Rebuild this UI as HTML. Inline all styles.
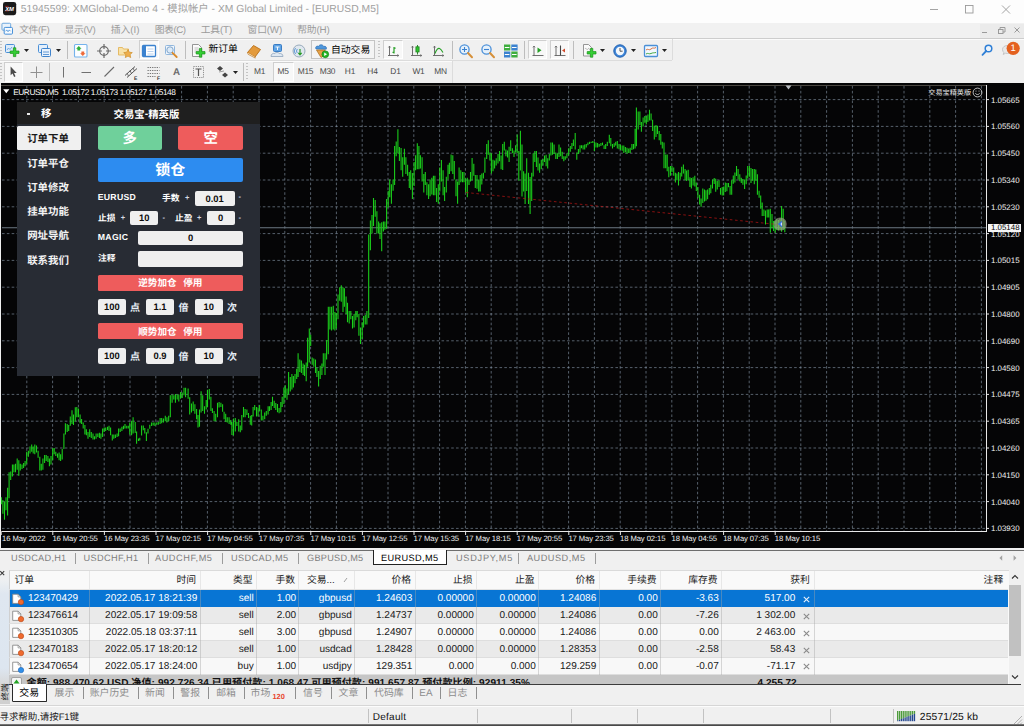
<!DOCTYPE html>
<html lang="zh"><head><meta charset="utf-8"><title>51945599: XMGlobal-Demo 4 - [EURUSD,M5]</title>
<style>
html,body{margin:0;padding:0;background:#f0f0f0;}
body{width:1024px;height:726px;overflow:hidden;font-family:"Liberation Sans","Noto Sans CJK SC",sans-serif;}
#app{text-rendering:geometricPrecision;position:relative;width:1024px;height:726px;overflow:hidden;background:#f0f0f0;font-size:10px;color:#000;}
#app *{box-sizing:border-box;}
.a{position:absolute;white-space:nowrap;}
svg{overflow:visible;}
.r{text-align:right;}
.c{text-align:center;}
.b{font-weight:bold;}

</style></head><body>
<div id="app">
<div class="a" style="left:0;top:0;width:1024px;height:23px;background:#fdfdfd"></div>
<svg class="a" style="left:2.900px;top:2px" width="13.200" height="13.200" viewBox="0 0 14 14"><rect x="0" y="0" width="14" height="14" rx="2.500" fill="#1a1a1a"/><path d="M2.200 4.600 L6 4.600 M2.200 9.400 L6 9.400" stroke="#c22" stroke-width=".7"/><text x="7" y="9.300" font-family="Liberation Sans" font-weight="bold" font-style="italic" font-size="6.200" fill="#fff" text-anchor="middle">XM</text></svg>
<div class="a" style="letter-spacing:0.040px;left:20.800px;top:3px;height:14px;line-height:14px;font-size:10.300px;color:#a0a0a0">51945599: XMGlobal-Demo 4 - 模拟帐户 - XM Global Limited - [EURUSD,M5]</div>
<svg class="a" style="left:920px;top:0" width="104" height="20" viewBox="0 0 104 20" fill="none" stroke="#9a9a9a" stroke-width="0.9"><path d="M10 9.500h8"/><rect x="45.500" y="5.500" width="7.500" height="7.500"/><path d="M82 5.500l8 8M90 5.500l-8 8"/></svg>
<div class="a" style="left:0;top:22.500px;width:1024px;height:15.500px;background:#f1f1f1"></div>
<svg class="a" style="left:0.500px;top:22.300px" width="13.500" height="13.500" viewBox="0 0 14 14" fill="none"><rect x="1" y="1.300" width="9" height="7.200" rx="1" stroke="#6aa5dd" fill="#e9f3fc"/><rect x="3.300" y="5.600" width="8.600" height="7" rx="1" stroke="#3d8ad6" fill="#f7fbff"/><path d="M4.800 9.600l1.200-1.400 1.300 1.900 1.300-1.900 1.300 1.400" stroke="#3d8ad6" stroke-width=".8"/></svg>
<div class="a" style="letter-spacing:-0.402px;left:19.2px;top:24px;height:14px;line-height:14px;font-size:9.800px;color:#9b9b9b">文件(F)</div>
<div class="a" style="letter-spacing:-0.331px;left:64.5px;top:24px;height:14px;line-height:14px;font-size:9.800px;color:#9b9b9b">显示(V)</div>
<div class="a" style="letter-spacing:0.011px;left:110.7px;top:24px;height:14px;line-height:14px;font-size:9.800px;color:#9b9b9b">插入(I)</div>
<div class="a" style="letter-spacing:-0.481px;left:154.8px;top:24px;height:14px;line-height:14px;font-size:9.800px;color:#9b9b9b">图表(C)</div>
<div class="a" style="letter-spacing:-0.162px;left:200.7px;top:24px;height:14px;line-height:14px;font-size:9.800px;color:#9b9b9b">工具(T)</div>
<div class="a" style="letter-spacing:-0.195px;left:247.6px;top:24px;height:14px;line-height:14px;font-size:9.800px;color:#9b9b9b">窗口(W)</div>
<div class="a" style="letter-spacing:-0.141px;left:297.2px;top:24px;height:14px;line-height:14px;font-size:9.800px;color:#9b9b9b">帮助(H)</div>
<div class="a" style="left:980px;top:23.500px;width:44px;height:14px;background:#ebebeb"></div>
<svg class="a" style="left:976px;top:24px" width="48" height="12" viewBox="0 0 48 12" fill="none" stroke="#9a9a9a" stroke-width="1"><path d="M6 8.500h5"/><rect x="22.500" y="5.500" width="4.500" height="4"/><path d="M24 5.500v-2h5v4.500h-2"/><path d="M38.500 3.500l5 5M43.500 3.500l-5 5"/></svg>
<div class="a" style="left:0;top:38px;width:1024px;height:46px;background:#f0f0f0"></div>
<div class="a" style="left:0;top:37.600px;width:1024px;height:1px;background:#cdcdcd"></div>
<div class="a" style="left:0;top:38.600px;width:1024px;height:1px;background:#fbfbfb"></div>
<div class="a" style="left:0;top:60px;width:672px;height:1px;background:#dcdcdc"></div>
<div class="a" style="left:672px;top:39px;width:1px;height:21px;background:#dcdcdc"></div>
<div class="a" style="left:0;top:61px;width:452px;height:1px;background:#fbfbfb"></div>
<div class="a" style="left:452px;top:61px;width:1px;height:22px;background:#dcdcdc"></div>
<div class="a" style="left:0px;top:41px;width:2px;height:18px;background:repeating-linear-gradient(#c4c4c4 0 1px,transparent 1px 3px)"></div>
<svg class="a" style="left:4.0px;top:42.6px" width="16" height="16" viewBox="0 0 16 16" fill="none"><rect x="1.5" y="1.5" width="9" height="8" rx="1" fill="#dcebfa" stroke="#4a8fd6"/><path d="M3 7l1.5-2 1.500 1.500 2-2.500" stroke="#4a8fd6" stroke-width=".7"/><path d="M6.200 8h3.200v-3.200h2.400v3.200h3.200v2.400h-3.200v3.200h-2.400v-3.200h-3.200z" fill="#35cf35" stroke="#149014" stroke-width=".7"/></svg>
<svg class="a" style="left:23.5px;top:49.0px" width="5" height="3" viewBox="0 0 5 3" fill="none"><path d="M0 0h5l-2.500 3z" fill="#222"/></svg>
<svg class="a" style="left:37.0px;top:42.6px" width="16" height="16" viewBox="0 0 16 16" fill="none"><rect x="1.5" y="1.5" width="9" height="8" rx="1" fill="#e4effb" stroke="#4a8fd6"/><rect x="4.5" y="5.5" width="9" height="8" rx="1" fill="#e9f2fc" stroke="#3f83cc"/><path d="M6 9h6M6 11.500h6" stroke="#3f83cc" stroke-width=".8"/></svg>
<svg class="a" style="left:56.0px;top:49.0px" width="5" height="3" viewBox="0 0 5 3" fill="none"><path d="M0 0h5l-2.500 3z" fill="#222"/></svg>
<div class="a" style="left:67.2px;top:41px;width:1px;height:18px;background:#bdbdbd"></div>
<svg class="a" style="left:73.0px;top:42.6px" width="16" height="16" viewBox="0 0 16 16" fill="none"><rect x="1.500" y="1.500" width="12.500" height="12.500" rx="1" fill="#fbfdff" stroke="#74b2ec" stroke-width="1.100"/><path d="M5.800 3l2.700 2.700-1.300 0v1.800h-2.800v-1.800h-1.300z" fill="#2fae3a"/><path d="M9.800 13l-2.700-2.700 1.300 0v-1.800h2.800v1.800h1.300z" fill="#ee6a3a"/></svg>
<svg class="a" style="left:96.0px;top:42.6px" width="16" height="16" viewBox="0 0 16 16" fill="none"><circle cx="8" cy="8" r="4.3" stroke="#6a6a6a" stroke-width="1.2"/><path d="M8 1v5M8 10v5M1 8h5M10 8h5" stroke="#6a6a6a" stroke-width="1.200"/></svg>
<svg class="a" style="left:117.0px;top:42.6px" width="17" height="16" viewBox="0 0 17 16" fill="none"><path d="M1.500 4.500h4l1 1.500h5v6h-10z" fill="#f8e2a8" stroke="#e3b55a" stroke-width=".9"/><path d="M11 6.500l1.300 2.700 3 .4-2.200 2 .6 3-2.700-1.500-2.700 1.500.6-3-2.200-2 3-.4z" fill="#efae4c" stroke="#cf8f2a" stroke-width=".7"/></svg>
<div class="a" style="left:139.0px;top:40px;width:19.5px;height:19px;background:#f8f8f8;border:1px solid #cfcfcf;border-right-color:#fff;border-bottom-color:#fff"></div>
<svg class="a" style="left:141.0px;top:42.6px" width="16" height="16" viewBox="0 0 16 16" fill="none"><rect x="1.5" y="2.5" width="13" height="11" rx="1" fill="#fff" stroke="#3b82cf" stroke-width="1.3"/><rect x="2" y="3" width="3" height="10" fill="#3b82cf"/><path d="M6.500 6h6M6.500 8.500h6M6.500 11h6" stroke="#a9c7ea" stroke-width=".8"/></svg>
<svg class="a" style="left:163.0px;top:42.6px" width="16" height="16" viewBox="0 0 16 16" fill="none"><rect x="2.5" y="2.5" width="9" height="9" rx="1" fill="#eef5fc" stroke="#8fb6dd"/><circle cx="7" cy="7" r="3.2" fill="#dcebf9" stroke="#7a9ec4" stroke-width=".9"/><path d="M9.500 9.800l4.200 4.200" stroke="#d98a2b" stroke-width="1.800" stroke-linecap="round"/></svg>
<div class="a" style="left:185.0px;top:41px;width:1px;height:18px;background:#bdbdbd"></div>
<svg class="a" style="left:190.3px;top:42.6px" width="16" height="16" viewBox="0 0 16 16" fill="none"><path d="M2.500 1.500h6l3 3v9h-9z" fill="#fafafa" stroke="#8a8a8a" stroke-width=".9"/><path d="M4.500 5h4M4.500 7h5M4.500 9h3" stroke="#aaa" stroke-width=".7"/><path d="M6.200 8.600h3.200v-3.200h2.400v3.200h3.200v2.400h-3.200v3.200h-2.400v-3.200h-3.200z" fill="#35cf35" stroke="#149014" stroke-width=".7"/></svg>
<div class="a" style="left:208.5px;top:43px;height:14px;line-height:14px;font-size:9.8px;color:#000">新订单</div>
<svg class="a" style="left:245.5px;top:42.6px" width="16" height="16" viewBox="0 0 16 16" fill="none"><path d="M1.500 9.500l6-7 7 4-5.500 7.500z" fill="#e39a3c" stroke="#b86d14" stroke-width=".9"/><path d="M1.500 9.500l.6 1.800 7.200 3.800-.3-1.100" fill="#f7e3c0" stroke="#b86d14" stroke-width=".6"/></svg>
<svg class="a" style="left:269.0px;top:42.6px" width="16" height="16" viewBox="0 0 16 16" fill="none"><rect x="4.5" y="1.5" width="8" height="7" rx="1" fill="#5fa4e6" stroke="#2d73c0" stroke-width=".9"/><path d="M6.500 4h4M8.500 4v3" stroke="#fff" stroke-width=".9"/><path d="M2 13.500c0-2.500 2-3.500 3.800-3 .8-1.400 3.600-1.400 4.400 0 2-.4 3.800.8 3.800 3z" fill="#dfe8f2" stroke="#8ea4bd" stroke-width=".8"/></svg>
<svg class="a" style="left:290.5px;top:42.6px" width="16" height="16" viewBox="0 0 16 16" fill="none"><circle cx="8" cy="8" r="6" fill="#dfe7ee" stroke="#8fa3b5" stroke-width=".9"/><path d="M4.500 5a4.500 4.500 0 0 0 0 6M6.500 6a2.600 2.600 0 0 0 0 4" stroke="#4f8fd3" stroke-width=".9"/><path d="M9 6v5.500M7.300 9.800l1.700 2 1.700-2" stroke="#2a9a2a" stroke-width="1.200"/></svg>
<div class="a" style="left:311px;top:40px;width:63.5px;height:19px;border:1px solid #c4c4c4;background:#f4f4f4"></div>
<svg class="a" style="left:313.5px;top:42.6px" width="16" height="16" viewBox="0 0 16 16" fill="none"><path d="M2 6c-1.200-2 1-3.600 2.600-2.600.6-2 4.200-2.200 5 0 2-.6 3.600 1 2.600 2.800z" fill="#4f97dc" stroke="#2c6fb5" stroke-width=".7"/><path d="M2.500 7l4.500 7.500 4-2.500V7z" fill="#e6a24a" stroke="#a86a18" stroke-width=".7"/><circle cx="11.3" cy="11.3" r="3.4" fill="#25b425" stroke="#0e7d0e" stroke-width=".6"/><path d="M10.200 9.600v3.400l2.800-1.700z" fill="#fff"/></svg>
<div class="a" style="left:331px;top:44px;height:14px;line-height:14px;font-size:9.8px;color:#000">自动交易</div>
<div class="a" style="left:378px;top:41px;width:2px;height:18px;background:repeating-linear-gradient(#c4c4c4 0 1px,transparent 1px 3px)"></div>
<div class="a" style="left:383.0px;top:40px;width:19.5px;height:19px;background:#f8f8f8;border:1px solid #cfcfcf;border-right-color:#fff;border-bottom-color:#fff"></div>
<svg class="a" style="left:384.5px;top:42.6px" width="16" height="16" viewBox="0 0 16 16" fill="none"><path d="M4.500 3.200v9.300M3 12.500h10.700" stroke="#606060" stroke-width=".9"/><path d="M3.400 4.500l1.100-1.400 1.100 1.400M12.400 11.400l1.400 1.100-1.400 1.100" stroke="#606060" stroke-width=".75"/><path d="M9 4v6.500M7.500 9.300h1.500M9 5.200h1.600" stroke="#27a027" stroke-width="1.200"/></svg>
<svg class="a" style="left:407.5px;top:42.6px" width="16" height="16" viewBox="0 0 16 16" fill="none"><path d="M4.500 3.200v9.300M3 12.500h10.700" stroke="#606060" stroke-width=".9"/><path d="M3.400 4.500l1.100-1.400 1.100 1.400M12.400 11.400l1.400 1.100-1.400 1.100" stroke="#606060" stroke-width=".75"/><path d="M9.500 2v9.500" stroke="#1d7d1d" stroke-width=".9"/><rect x="7.900" y="3.800" width="3.200" height="5.200" fill="#2ec22e" stroke="#1d7d1d" stroke-width=".7"/></svg>
<svg class="a" style="left:430.0px;top:42.6px" width="16" height="16" viewBox="0 0 16 16" fill="none"><path d="M4.500 3.200v9.300M3 12.500h10.700" stroke="#606060" stroke-width=".9"/><path d="M3.400 4.500l1.100-1.400 1.100 1.400M12.400 11.400l1.400 1.100-1.400 1.100" stroke="#606060" stroke-width=".75"/><path d="M5 10.500c1.200-3.600 3-5.800 4.600-5s2.600 2.600 3.400 4" stroke="#27a027" stroke-width="1.100"/></svg>
<div class="a" style="left:451.5px;top:41px;width:1px;height:18px;background:#bdbdbd"></div>
<svg class="a" style="left:457.5px;top:42.6px" width="16" height="16" viewBox="0 0 16 16" fill="none"><circle cx="6.5" cy="6.5" r="4.6" fill="#e6f1fb" stroke="#4b90d9" stroke-width="1.3"/><path d="M10 10l4 4.200" stroke="#d6903a" stroke-width="2" stroke-linecap="round"/><path d="M4 6.500h5M6.500 4v5" stroke="#3b82cf" stroke-width="1.100"/></svg>
<svg class="a" style="left:479.5px;top:42.6px" width="16" height="16" viewBox="0 0 16 16" fill="none"><circle cx="6.5" cy="6.5" r="4.6" fill="#e6f1fb" stroke="#4b90d9" stroke-width="1.3"/><path d="M10 10l4 4.200" stroke="#d6903a" stroke-width="2" stroke-linecap="round"/><path d="M4 6.500h5" stroke="#3b82cf" stroke-width="1.100"/></svg>
<svg class="a" style="left:502.5px;top:42.6px" width="16" height="16" viewBox="0 0 16 16" fill="none"><rect x="1" y="1.5" width="6.3" height="6" fill="#3fae3f"/><rect x="8.3" y="1.5" width="6.3" height="6" fill="#3b82cf"/><rect x="1" y="8.5" width="6.3" height="6" fill="#3b82cf"/><rect x="8.3" y="8.5" width="6.3" height="6" fill="#3fae3f"/><path d="M1.800 4.500h4.600M9 4.500h4.600M1.800 11.500h4.600M9 11.500h4.600" stroke="#fff" stroke-width="1"/></svg>
<div class="a" style="left:524.0px;top:41px;width:1px;height:18px;background:#bdbdbd"></div>
<div class="a" style="left:527.5px;top:40px;width:19.5px;height:19px;background:#f8f8f8;border:1px solid #cfcfcf;border-right-color:#fff;border-bottom-color:#fff"></div>
<svg class="a" style="left:529.5px;top:42.6px" width="16" height="16" viewBox="0 0 16 16" fill="none"><path d="M4 3v9.500M2.500 12.500h11" stroke="#606060" stroke-width=".9"/><path d="M2.900 4.400l1.100-1.400 1.100 1.400" stroke="#606060" stroke-width=".75"/><path d="M7.500 4.500v5.500l4-2.750z" fill="#27a027"/></svg>
<div class="a" style="left:549.5px;top:40px;width:19.5px;height:19px;background:#f8f8f8;border:1px solid #cfcfcf;border-right-color:#fff;border-bottom-color:#fff"></div>
<svg class="a" style="left:551.5px;top:42.6px" width="16" height="16" viewBox="0 0 16 16" fill="none"><path d="M4 3v9.500M2.500 12.500h11" stroke="#606060" stroke-width=".9"/><path d="M2.900 4.400l1.100-1.400 1.100 1.400" stroke="#606060" stroke-width=".75"/><path d="M8.500 2.500v10" stroke="#444" stroke-width="1.100"/><path d="M13 5.500l-3 2 3 2z" fill="#d24a2a"/></svg>
<div class="a" style="left:573.0px;top:41px;width:1px;height:18px;background:#bdbdbd"></div>
<svg class="a" style="left:580.5px;top:42.6px" width="16" height="16" viewBox="0 0 16 16" fill="none"><path d="M2.500 1.500h5l3 3v8.500h-8z" fill="#fafafa" stroke="#8a8a8a" stroke-width=".9"/><path d="M4 6c1-2 2 2 3 0s1.500 1.500 2 .5" stroke="#999" stroke-width=".7"/><path d="M6.200 8.600h3.200v-3.200h2.400v3.200h3.200v2.400h-3.200v3.200h-2.400v-3.200h-3.200z" fill="#35cf35" stroke="#149014" stroke-width=".7"/></svg>
<svg class="a" style="left:599.5px;top:49.0px" width="5" height="3" viewBox="0 0 5 3" fill="none"><path d="M0 0h5l-2.500 3z" fill="#222"/></svg>
<svg class="a" style="left:611.5px;top:42.6px" width="16" height="16" viewBox="0 0 16 16" fill="none"><circle cx="8" cy="8" r="6.200" fill="#3f86d9" stroke="#1f5fae" stroke-width="1"/><circle cx="8" cy="8" r="4.200" fill="#f4f8fc"/><path d="M8 5v3.200h2.600" stroke="#444" stroke-width=".9"/></svg>
<svg class="a" style="left:630.5px;top:49.0px" width="5" height="3" viewBox="0 0 5 3" fill="none"><path d="M0 0h5l-2.500 3z" fill="#222"/></svg>
<svg class="a" style="left:642.5px;top:42.6px" width="16" height="16" viewBox="0 0 16 16" fill="none"><rect x="1.500" y="2.500" width="13" height="11" rx="1" fill="#f2f8ff" stroke="#4a8fd6" stroke-width="1.300"/><path d="M3 7c2-2 3 1 5-1s3 0 5-1.500" stroke="#d2622a" stroke-width=".9"/><path d="M3 11c2-1.500 3 .5 5-.5s3-.5 5-1" stroke="#2e9e2e" stroke-width=".9"/></svg>
<svg class="a" style="left:662.0px;top:49.0px" width="5" height="3" viewBox="0 0 5 3" fill="none"><path d="M0 0h5l-2.500 3z" fill="#222"/></svg>
<svg class="a" style="left:979.5px;top:43.0px" width="14" height="14" viewBox="0 0 14 14" fill="none"><circle cx="8.500" cy="5.500" r="3.300" stroke="#2f7fd6" stroke-width="1.500" fill="#eaf3fc"/><path d="M6.200 8l-3.700 3.800" stroke="#2f7fd6" stroke-width="1.800" stroke-linecap="round"/></svg>
<svg class="a" style="left:1001.0px;top:41.0px" width="18" height="16" viewBox="0 0 18 16" fill="none"><path d="M1.500 8.500c0-2.500 2.200-4 5-4s5 1.500 5 4-2.200 4-5 4c-.7 0-1.300-.1-1.900-.3l-2.400 1.300.6-2c-.8-.7-1.300-1.800-1.300-3z" fill="#e8e8e8" stroke="#bdbdbd" stroke-width=".8"/><circle cx="12.200" cy="7.300" r="6.600" fill="#e4611f"/><text x="12.200" y="10.300" font-family="Liberation Sans" font-size="9.500" fill="#fff" text-anchor="middle">1</text></svg>
<div class="a" style="left:0px;top:63px;width:2px;height:18px;background:repeating-linear-gradient(#c4c4c4 0 1px,transparent 1px 3px)"></div>
<div class="a" style="left:3.500px;top:62px;width:19.500px;height:20px;background:#f8f8f8;border:1px solid #cfcfcf;border-right-color:#fff;border-bottom-color:#fff"></div>
<svg class="a" style="left:5.5px;top:64.0px" width="16" height="16" viewBox="0 0 16 16" fill="none"><path d="M4.600 2.500v8.800l2-1.800 1.500 3.400 1.400-.6-1.500-3.400h2.700z" fill="#4c4c4c"/></svg>
<svg class="a" style="left:28.0px;top:64.0px" width="16" height="16" viewBox="0 0 16 16" fill="none"><path d="M8.500 2.500v11.500M2.500 8.500h12" stroke="#909090" stroke-width="1"/></svg>
<div class="a" style="left:49.0px;top:63px;width:1px;height:18px;background:#bdbdbd"></div>
<svg class="a" style="left:55.0px;top:64.0px" width="16" height="16" viewBox="0 0 16 16" fill="none"><path d="M8.500 3v10.500" stroke="#707070" stroke-width="1"/></svg>
<svg class="a" style="left:78.0px;top:64.0px" width="16" height="16" viewBox="0 0 16 16" fill="none"><path d="M3.500 8.500h9.500" stroke="#707070" stroke-width="1"/></svg>
<svg class="a" style="left:101.0px;top:64.0px" width="16" height="16" viewBox="0 0 16 16" fill="none"><path d="M3.500 12.500l9.500-9.500" stroke="#6a6a6a" stroke-width="1.100"/></svg>
<svg class="a" style="left:123.0px;top:64.0px" width="16" height="16" viewBox="0 0 16 16" fill="none"><path d="M2 11.500l10-9M4 13.500l10-9" stroke="#555" stroke-width="1"/><path d="M4 9l1.500 3M7 6.500l1.500 3M10 4l1.500 3" stroke="#555" stroke-width=".8"/><text x="11" y="15.500" font-family="Liberation Sans" font-weight="bold" font-size="5" fill="#333">E</text></svg>
<svg class="a" style="left:146.0px;top:64.0px" width="16" height="16" viewBox="0 0 16 16" fill="none"><path d="M1.500 3.500h12M1.500 6.500h12M1.500 9.500h12M1.500 12.500h8" stroke="#666" stroke-width=".9" stroke-dasharray="1.300 1"/><text x="11" y="15.500" font-family="Liberation Sans" font-weight="bold" font-size="5" fill="#333">F</text></svg>
<div class="a" style="left:170.500px;top:65.200px;width:12px;height:15px;line-height:15px;font-size:9.800px;font-weight:bold;color:#6c6c6c;text-align:center">A</div>
<svg class="a" style="left:190.0px;top:64.0px" width="16" height="16" viewBox="0 0 16 16" fill="none"><rect x="3.500" y="2.500" width="10" height="11" stroke="#777" stroke-width=".8" stroke-dasharray="1.200 1"/><path d="M5.500 5h6M8.500 5v7" stroke="#555" stroke-width="1.200"/></svg>
<svg class="a" style="left:214.0px;top:64.0px" width="16" height="16" viewBox="0 0 16 16" fill="none"><path d="M3 4.500l3-2.500 3 2.500-3 2.500z" fill="#444"/><path d="M8 11l3-2.500 3 2.500-3 2.500z" fill="#444"/><path d="M5 8l5-1" stroke="#888" stroke-width=".8"/></svg>
<svg class="a" style="left:232.5px;top:71.0px" width="5" height="3" viewBox="0 0 5 3" fill="none"><path d="M0 0h5l-2.500 3z" fill="#222"/></svg>
<div class="a" style="left:243.0px;top:63px;width:1px;height:18px;background:#bdbdbd"></div>
<div class="a" style="left:246px;top:63px;width:2px;height:18px;background:repeating-linear-gradient(#c4c4c4 0 1px,transparent 1px 3px)"></div>
<div class="a" style="left:273px;top:62px;width:21px;height:20px;background:#f8f8f8;border:1px solid #cfcfcf;border-right-color:#fff;border-bottom-color:#fff"></div>
<div class="a" style="left:244.5px;top:65px;width:30px;height:13px;line-height:13px;font-size:8.400px;color:#4a4a4a;text-align:center;letter-spacing:-.2px">M1</div>
<div class="a" style="left:268.0px;top:65px;width:30px;height:13px;line-height:13px;font-size:8.400px;color:#4a4a4a;text-align:center;letter-spacing:-.2px">M5</div>
<div class="a" style="left:290.5px;top:65px;width:30px;height:13px;line-height:13px;font-size:8.400px;color:#4a4a4a;text-align:center;letter-spacing:-.2px">M15</div>
<div class="a" style="left:312.5px;top:65px;width:30px;height:13px;line-height:13px;font-size:8.400px;color:#4a4a4a;text-align:center;letter-spacing:-.2px">M30</div>
<div class="a" style="left:335.0px;top:65px;width:30px;height:13px;line-height:13px;font-size:8.400px;color:#4a4a4a;text-align:center;letter-spacing:-.2px">H1</div>
<div class="a" style="left:357.5px;top:65px;width:30px;height:13px;line-height:13px;font-size:8.400px;color:#4a4a4a;text-align:center;letter-spacing:-.2px">H4</div>
<div class="a" style="left:380.5px;top:65px;width:30px;height:13px;line-height:13px;font-size:8.400px;color:#4a4a4a;text-align:center;letter-spacing:-.2px">D1</div>
<div class="a" style="left:403.5px;top:65px;width:30px;height:13px;line-height:13px;font-size:8.400px;color:#4a4a4a;text-align:center;letter-spacing:-.2px">W1</div>
<div class="a" style="left:425.5px;top:65px;width:30px;height:13px;line-height:13px;font-size:8.400px;color:#4a4a4a;text-align:center;letter-spacing:-.2px">MN</div>
<div class="a" style="left:0;top:83px;width:1024px;height:467px;background:#f0f0f0"></div>
<div class="a" style="left:1px;top:83px;width:1023px;height:464.7px;background:#050506"></div>
<svg class="a" style="left:0;top:0" width="1024" height="726" viewBox="0 0 1024 726" fill="none"><path d="M1 85.500H986" stroke="#4a4640" stroke-width="1"/><path d="M26.80 86V531M52.60 86V531M78.40 86V531M104.20 86V531M130.00 86V531M155.80 86V531M181.60 86V531M207.40 86V531M233.20 86V531M259.00 86V531M284.80 86V531M310.60 86V531M336.40 86V531M362.20 86V531M388.00 86V531M413.80 86V531M439.60 86V531M465.40 86V531M491.20 86V531M517.00 86V531M542.80 86V531M568.60 86V531M594.40 86V531M620.20 86V531M646.00 86V531M671.80 86V531M697.60 86V531M723.40 86V531M749.20 86V531M775.00 86V531M800.80 86V531M826.60 86V531M852.40 86V531M878.20 86V531M904.00 86V531M929.80 86V531M955.60 86V531M981.40 86V531" stroke="#8fa1b4" stroke-width=".95" stroke-dasharray="2.600 2.230" opacity=".62"/><path d="M2 99.60H986M2 126.40H986M2 153.20H986M2 180.00H986M2 206.80H986M2 233.60H986M2 260.40H986M2 287.20H986M2 314.00H986M2 340.80H986M2 367.60H986M2 394.40H986M2 421.20H986M2 448.00H986M2 474.80H986M2 501.60H986M2 528.40H986" stroke="#8fa1b4" stroke-width=".95" stroke-dasharray="2.600 2.230" opacity=".62"/><path d="M2 227.800H986" stroke="#6c7883" stroke-width="1.100"/><path d="M986.500 85V532 M2 531.500H986.500" stroke="#e8e8e8" stroke-width="1"/><path d="M986 99.60h3M986 126.40h3M986 153.20h3M986 180.00h3M986 206.80h3M986 233.60h3M986 260.40h3M986 287.20h3M986 314.00h3M986 340.80h3M986 367.60h3M986 394.40h3M986 421.20h3M986 448.00h3M986 474.80h3M986 501.60h3M986 528.40h3" stroke="#e8e8e8" stroke-width="1"/><path d="M1.20 531v4M52.80 531v4M104.40 531v4M156.00 531v4M207.60 531v4M259.20 531v4M310.80 531v4M362.40 531v4M414.00 531v4M465.60 531v4M517.20 531v4M568.80 531v4M620.40 531v4M672.00 531v4M723.60 531v4M775.20 531v4" stroke="#e8e8e8" stroke-width="1"/><path d="M1.4 497.3V504.2M2.9 499.9V513.7M4.5 501.6V519.7M6.0 497.3V510.2M7.6 487.8V515.4M9.1 472.3V498.2M10.7 471.5V480.1M12.4 464.6V476.6M13.9 464.6V472.3M15.5 463.7V472.3M17.2 458.6V469.7M18.8 460.3V475.8M20.3 463.7V470.6M22.0 464.6V468.9M23.6 462.9V468.0M25.1 461.1V466.3M26.7 451.7V463.7M28.4 450.8V456.8M30.0 446.5V453.4M31.7 444.4V451.7M33.2 446.5V453.4M34.8 444.4V454.2M36.5 445.6V452.5M38.1 450.8V457.7M39.8 456.8V470.6M41.3 463.7V470.6M42.9 458.6V469.7M44.6 455.1V462.9M46.2 455.1V461.1M47.9 456.0V462.0M49.4 458.6V466.3M51.0 456.0V464.6M52.7 448.2V460.3M54.2 447.9V454.2M55.8 451.7V456.0M57.5 453.4V457.7M59.1 452.5V460.3M60.6 454.2V461.1M62.2 449.1V459.4M63.9 433.6V449.1M65.4 423.2V434.4M67.2 424.1V431.9M68.7 425.0V431.0M70.3 416.4V425.8M72.0 410.3V424.1M73.5 414.6V425.0M75.3 407.2V421.5M76.8 406.9V417.2M78.4 408.6V417.2M80.1 414.6V423.2M81.6 418.9V424.1M83.2 422.4V428.4M84.9 425.0V434.4M86.4 429.3V435.3M88.0 431.9V438.7M89.7 429.3V437.0M91.3 431.9V437.9M93.0 433.6V439.6M94.5 436.2V439.6M96.1 433.6V438.7M97.8 433.6V437.0M99.4 432.7V437.9M100.9 433.6V438.7M102.6 428.4V437.0M104.2 427.6V431.9M105.7 427.6V431.0M107.5 426.7V430.1M109.0 425.8V431.0M110.6 427.6V435.3M112.3 434.4V440.5M113.8 434.4V438.7M115.4 434.4V437.9M117.1 433.6V437.0M118.6 428.4V436.2M120.2 428.4V431.9M121.9 426.7V431.0M123.5 425.8V429.3M125.0 424.1V428.4M126.7 425.8V428.4M128.3 425.8V428.4M129.8 422.4V434.4M131.6 420.7V435.3M133.1 417.2V433.6M135.2 422.0V432.9M136.6 431.5V443.8M138.5 438.4V441.1M139.800 437.700V440.400M141.600 425.400V435.600M143.300 425.400V430.200M144.800 428.100V433.600M146.400 432.200V441.100M148.0 428.8V433.6M149.800 424.700V428.800M151.600 422.600V426.100M153.200 422.600V425.400M154.900 422.600V426.100M156.700 422.600V424.700M158.300 422.0V424.7M160.100 417.900V424.0M161.700 417.900V423.300M163.500 418.500V422.600M165.300 415.800V421.300M166.900 417.200V422.600M168.700 415.800V421.300M170.300 395.300V417.200M172.100 394.600V402.800M173.800 395.300V399.400M175.400 393.900V402.800M177.200 394.600V399.400M178.800 394.600V401.400M180.600 391.900V398.700M182.200 392.600V398.0M184.0 387.8V395.3M185.600 387.800V397.300M188.100 388.500V398.700M189.700 397.300V414.400M191.500 403.500V412.400M193.200 401.400V411.0M194.900 404.200V413.8M196.600 409.0V419.2M198.0 415.1V427.4M199.500 409.600V426.700M201.100 391.200V412.400M202.700 395.300V411.0M204.500 406.200V413.8M206.200 400.100V409.600M207.500 389.800V406.900M209.300 389.100V399.400M210.900 396.700V411.0M212.400 408.300V413.1M214.100 411.0V421.3M215.700 413.8V421.3M217.500 402.800V417.200M219.100 402.100V407.600M220.900 402.800V406.900M222.600 404.200V411.7M224.100 411.700V419.200M225.700 413.800V422.0M227.300 417.200V422.600M229.100 417.200V424.0M230.800 419.900V424.700M231.900 422.0V434.9M233.500 418.500V435.600M235.300 417.900V431.500M236.900 422.0V426.1M238.700 419.200V431.500M240.300 425.400V432.200M241.800 415.100V430.200M243.500 406.900V417.200M245.100 409.0V417.2M246.900 409.600V415.100M248.500 413.100V417.900M250.300 415.800V424.700M251.700 415.100V425.400M253.100 406.900V416.500M254.700 404.900V410.300M256.500 406.900V416.500M258.100 407.600V416.500M259.600 404.900V411.0M261.300 409.600V420.600M262.900 415.800V420.600M264.700 412.400V419.200M266.300 411.0V415.8M268.100 406.200V414.400M269.500 406.200V411.0M271.100 401.900V410.100M272.500 396.700V406.0M274.200 400.800V408.0M275.800 402.900V410.100M277.500 403.900V412.200M279.100 408.0V413.2M280.800 401.900V412.200M282.200 396.700V407.0M283.900 387.400V403.900M285.300 385.300V397.700M287.0 388.4V399.8M288.600 371.900V394.600M290.300 377.100V391.500M291.900 374.0V389.5M293.400 376.0V387.4M295.0 374.0V383.3M296.700 368.800V379.100M298.100 353.300V377.100M299.800 359.500V371.900M301.400 360.500V372.900M303.100 363.600V375.0M304.500 364.700V376.0M306.200 362.600V381.200M307.600 337.800V366.700M309.300 328.500V362.600M310.700 334.700V346.100M312.200 357.400V364.700M313.800 358.500V366.700M315.500 359.500V372.900M316.900 367.800V377.100M318.600 370.900V386.400M320.200 365.700V379.100M321.900 363.600V375.0M323.300 353.300V366.700M325.0 353.3V375.0M326.600 339.900V359.500M328.300 306.800V354.300M329.900 306.800V329.600M331.600 306.800V330.600M333.300 305.800V329.600M334.900 312.0V330.6M336.300 313.0V328.5M338.0 294.5V319.2M339.700 287.200V300.700M341.300 285.200V301.700M343.0 287.2V312.0M344.400 288.300V306.800M346.100 296.500V314.100M347.500 302.700V322.300M349.200 311.0V323.4M350.800 311.0V319.2M352.500 316.100V328.500M354.100 314.100V327.500M355.800 311.0V320.3M357.200 311.0V317.2M358.900 314.100V335.800M360.500 327.500V344.0M362.200 322.300V338.900M363.600 316.100V327.500M365.300 315.100V324.400M366.900 311.0V324.4M368.700 234.400V318.100M370.400 220.500V250.200M372.0 214.9V233.5M373.500 198.100V226.0M375.200 200.0V216.7M376.900 211.200V233.500M378.600 221.400V233.500M380.0 223.3V239.1M381.700 222.300V251.200M383.400 221.400V231.600M384.900 221.400V229.800M386.600 199.100V228.800M388.200 190.700V207.400M389.700 179.500V197.200M391.400 184.200V203.700M393.100 179.500V190.700M394.600 146.0V185.1M396.200 141.400V156.3M397.900 129.300V153.500M399.400 147.0V160.9M401.100 147.900V170.200M402.700 157.200V176.700M404.400 148.800V164.700M405.900 157.200V174.0M407.600 164.700V175.800M409.300 172.100V187.900M410.700 170.200V189.800M412.400 173.0V199.1M414.100 161.900V186.0M415.600 155.300V170.200M417.300 143.300V169.300M418.900 146.0V169.300M420.400 155.300V168.400M422.100 157.200V181.400M423.800 174.0V192.6M425.300 172.100V185.100M426.900 182.300V195.300M428.600 184.200V199.100M430.100 179.500V196.300M431.800 177.700V194.400M433.400 175.800V195.300M434.900 175.800V195.300M436.600 187.900V201.900M438.300 184.200V203.700M439.800 167.400V191.600M441.400 160.0V181.4M443.100 170.200V195.300M444.600 187.0V200.9M446.300 176.700V192.600M448.0 164.7V179.5M449.400 162.800V174.0M451.100 154.400V171.200M452.800 155.300V174.0M454.300 160.900V179.500M456.0 179.5V196.3M457.600 181.400V203.700M459.100 167.400V185.100M460.800 170.200V182.300M462.500 172.100V182.300M464.0 172.1V182.3M465.600 178.600V192.600M467.300 177.700V197.200M469.0 179.5V185.1M470.500 172.100V181.400M472.100 158.100V180.500M473.800 163.700V175.800M475.300 174.900V187.900M477.0 174.9V188.8M478.700 179.500V191.600M480.200 175.0V191.6M481.800 173.500V184.400M483.400 172.800V178.600M484.900 157.600V172.800M486.700 143.900V159.0M488.300 140.200V154.700M489.900 152.500V160.500M491.400 153.300V173.500M493.0 159.8V171.3M494.600 160.500V168.400M496.200 158.300V165.600M498.0 154.0V163.4M499.500 151.100V161.200M501.100 155.400V169.200M502.700 143.900V169.900M504.300 141.700V150.400M505.900 149.600V156.200M507.500 150.400V157.600M509.100 146.800V161.900M510.700 140.200V151.100M512.400 148.200V153.300M514.0 150.4V156.9M515.600 145.300V152.500M517.200 134.500V153.300M518.800 151.100V180.700M520.400 130.800V170.600M522.0 144.6V196.600M523.600 171.300V191.600M525.100 173.500V203.900M526.700 158.300V190.900M528.500 172.800V203.900M530.100 177.100V214.0M531.700 172.800V201.0M533.200 153.300V176.400M534.800 151.100V161.900M536.400 151.100V167.0M538.0 157.6V170.6M539.600 163.400V172.800M541.300 159.800V169.200M542.900 159.0V165.6M544.500 155.400V161.900M546.100 154.700V166.300M547.700 158.300V168.400M549.300 154.0V160.5M550.900 142.400V155.400M552.500 142.400V154.700M554.100 144.600V154.0M555.800 152.500V159.0M557.400 153.300V159.0M559.0 144.6V156.9M560.600 147.500V156.200M562.200 151.800V159.0M563.800 156.200V161.200M565.300 156.200V159.800M566.900 153.300V158.300M568.700 148.200V155.400M570.300 146.0V151.8M571.900 143.100V148.900M573.400 139.500V146.0M575.200 133.0V149.6M576.800 152.500V159.800M578.400 148.900V154.0M580.0 145.3V152.5M581.500 145.300V148.200M583.100 145.300V149.600M584.700 144.600V149.600M586.300 143.900V147.500M587.900 142.400V145.300M589.600 141.700V143.900M591.200 141.700V143.100M592.800 141.0V143.1M594.400 141.700V151.100M596.0 142.4V147.5M597.600 143.100V147.500M599.200 143.900V146.800M600.900 143.100V146.0M602.500 142.400V145.300M604.100 145.300V148.900M605.700 143.900V148.900M607.300 141.700V146.0M609.300 134.800V143.200M610.800 137.900V146.200M612.500 143.900V148.500M614.200 143.200V147.0M615.700 141.700V145.500M617.300 140.900V148.500M619.0 143.9V149.2M620.500 144.700V150.0M622.200 145.500V150.800M623.800 145.500V153.0M625.400 147.0V152.3M627.0 147.7V153.8M628.700 148.500V153.0M630.200 147.700V153.0M631.900 143.900V150.0M633.500 143.900V149.200M635.100 128.800V148.500M636.400 107.600V146.200M638.200 111.400V129.500M639.900 111.400V125.0M641.400 122.0V131.8M643.100 117.400V126.500M644.800 115.900V122.700M646.300 115.900V124.200M647.900 114.400V122.0M649.500 109.800V120.500M651.100 113.600V120.500M652.600 119.700V131.1M654.300 125.800V139.4M656.0 125.0V137.1M657.500 125.800V134.100M659.200 131.100V140.200M660.800 134.100V144.700M662.300 141.700V148.500M664.0 142.4V168.2M665.700 154.500V168.200M667.200 154.500V171.200M668.800 166.700V177.300M670.500 165.900V175.800M672.0 165.9V172.0M673.700 167.400V175.800M675.400 172.700V182.600M676.900 173.500V180.300M678.500 172.0V185.6M680.200 172.700V179.500M681.700 166.700V176.500M683.400 164.400V173.500M685.100 168.900V180.300M686.600 170.500V181.100M688.200 169.700V180.300M689.900 177.300V187.100M691.400 178.0V188.6M693.100 177.300V185.600M694.800 175.800V186.400M696.300 182.600V190.900M697.900 187.100V197.700M699.600 194.700V204.500M701.100 198.500V206.800M702.800 188.600V203.0M704.500 189.400V201.500M706.0 190.2V200.8M707.600 189.400V199.200M709.300 187.900V194.700M710.800 184.800V193.200M712.500 179.500V188.600M714.200 178.0V184.100M715.700 178.800V191.700M717.300 181.100V189.400M719.0 180.3V187.1M720.500 187.900V194.700M722.200 187.100V195.500M723.700 186.400V195.500M725.300 182.500V191.900M726.900 183.100V191.300M728.500 183.100V187.200M730.100 186.0V194.8M731.700 180.200V194.800M733.300 175.500V183.700M734.900 172.600V182.500M736.500 166.100V176.100M738.100 169.0V179.6M739.800 174.300V181.300M741.300 177.800V183.100M742.900 179.0V184.8M744.600 179.600V188.900M746.200 175.500V184.300M747.700 166.100V178.400M749.400 166.100V176.700M751.0 167.9V183.1M752.600 169.0V180.7M754.300 169.0V184.3M755.800 169.600V180.700M757.400 174.300V194.800M759.100 190.700V197.700M760.700 195.400V208.800M762.200 202.400V215.900M763.900 209.400V215.900M765.500 210.600V224.600M767.200 209.400V217.6M768.700 209.400V217.600M770.300 208.800V232.800M772.0 214.1V228.2M773.600 221.1V231.1M775.200 220.500V232.800M776.800 218.800V229.900M778.400 220.0V230.5M780.0 218.2V229.900M781.600 205.900V231.700M783.200 208.800V229.900M784.800 220.500V232.200" stroke="#1bd01b" stroke-width="1.080"/><path d="" stroke="#1bd01b" stroke-width="1.080"/><path d="M466 192.500L777.500 224.500" stroke="#b01414" stroke-width=".9" stroke-dasharray="2.600 2.600" opacity=".85"/><circle cx="780.200" cy="224" r="6.600" fill="#b8a2a2" fill-opacity=".55"/><path d="M782 220.800v6.600l-4.200-3.300z" fill="#2f6fe0"/><path d="M782 222v4.200l-1.600-2.100z" fill="#cfe0ff"/><path d="M3.200 89.300h6.200l-3.100 4z" fill="#fff"/><path d="M785.500 85.500h6l-3 4z" fill="#b8bcc0"/></svg>
<div class="a" style="letter-spacing:-0.430px;left:13.200px;top:86px;height:12px;line-height:12px;font-size:8.300px;color:#fff;white-space:pre">EURUSD,M5  1.05172 1.05173 1.05127 1.05148</div>
<div class="a" style="left:928.300px;top:88.300px;height:10px;line-height:10px;font-size:7.150px;color:#e8e8e8">交易宝精英版</div>
<svg class="a" style="left:972.300px;top:87.300px" width="11" height="11" viewBox="0 0 11 11" fill="none" stroke="#e8e8e8" stroke-width=".8"><circle cx="5.500" cy="5.500" r="4.400"/><path d="M3.300 6.300c.8 1.600 3.600 1.600 4.400 0"/><path d="M4 3.600v1M7 3.600v1"/></svg>
<div class="a" style="left:991px;top:95.6px;height:10px;line-height:10px;font-size:7.900px;color:#f2f2f2">1.05665</div>
<div class="a" style="left:991px;top:122.4px;height:10px;line-height:10px;font-size:7.900px;color:#f2f2f2">1.05560</div>
<div class="a" style="left:991px;top:149.2px;height:10px;line-height:10px;font-size:7.900px;color:#f2f2f2">1.05450</div>
<div class="a" style="left:991px;top:176.0px;height:10px;line-height:10px;font-size:7.900px;color:#f2f2f2">1.05340</div>
<div class="a" style="left:991px;top:202.8px;height:10px;line-height:10px;font-size:7.900px;color:#f2f2f2">1.05230</div>
<div class="a" style="left:991px;top:229.6px;height:10px;line-height:10px;font-size:7.900px;color:#f2f2f2">1.05120</div>
<div class="a" style="left:991px;top:256.4px;height:10px;line-height:10px;font-size:7.900px;color:#f2f2f2">1.05015</div>
<div class="a" style="left:991px;top:283.2px;height:10px;line-height:10px;font-size:7.900px;color:#f2f2f2">1.04905</div>
<div class="a" style="left:991px;top:310.0px;height:10px;line-height:10px;font-size:7.900px;color:#f2f2f2">1.04800</div>
<div class="a" style="left:991px;top:336.8px;height:10px;line-height:10px;font-size:7.900px;color:#f2f2f2">1.04690</div>
<div class="a" style="left:991px;top:363.6px;height:10px;line-height:10px;font-size:7.900px;color:#f2f2f2">1.04580</div>
<div class="a" style="left:991px;top:390.4px;height:10px;line-height:10px;font-size:7.900px;color:#f2f2f2">1.04475</div>
<div class="a" style="left:991px;top:417.2px;height:10px;line-height:10px;font-size:7.900px;color:#f2f2f2">1.04365</div>
<div class="a" style="left:991px;top:444.0px;height:10px;line-height:10px;font-size:7.900px;color:#f2f2f2">1.04260</div>
<div class="a" style="left:991px;top:470.8px;height:10px;line-height:10px;font-size:7.900px;color:#f2f2f2">1.04150</div>
<div class="a" style="left:991px;top:497.6px;height:10px;line-height:10px;font-size:7.900px;color:#f2f2f2">1.04040</div>
<div class="a" style="left:991px;top:524.4px;height:10px;line-height:10px;font-size:7.900px;color:#f2f2f2">1.03930</div>
<div class="a" style="left:988px;top:223.700px;width:32.800px;height:8.500px;background:#f6f6f6"></div>
<div class="a" style="left:991px;top:223.300px;height:10px;line-height:10px;font-size:7.900px;color:#000;font-weight:normal">1.05148</div>
<div class="a" style="left:2.0px;top:534.300px;height:10px;line-height:10px;font-size:7.700px;color:#f2f2f2;letter-spacing:-.1px">16 May 2022</div>
<div class="a" style="left:52.4px;top:534.300px;height:10px;line-height:10px;font-size:7.700px;color:#f2f2f2;letter-spacing:-.1px">16 May 20:55</div>
<div class="a" style="left:104.0px;top:534.300px;height:10px;line-height:10px;font-size:7.700px;color:#f2f2f2;letter-spacing:-.1px">16 May 23:35</div>
<div class="a" style="left:155.6px;top:534.300px;height:10px;line-height:10px;font-size:7.700px;color:#f2f2f2;letter-spacing:-.1px">17 May 02:15</div>
<div class="a" style="left:207.2px;top:534.300px;height:10px;line-height:10px;font-size:7.700px;color:#f2f2f2;letter-spacing:-.1px">17 May 04:55</div>
<div class="a" style="left:258.8px;top:534.300px;height:10px;line-height:10px;font-size:7.700px;color:#f2f2f2;letter-spacing:-.1px">17 May 07:35</div>
<div class="a" style="left:310.4px;top:534.300px;height:10px;line-height:10px;font-size:7.700px;color:#f2f2f2;letter-spacing:-.1px">17 May 10:15</div>
<div class="a" style="left:362.0px;top:534.300px;height:10px;line-height:10px;font-size:7.700px;color:#f2f2f2;letter-spacing:-.1px">17 May 12:55</div>
<div class="a" style="left:413.6px;top:534.300px;height:10px;line-height:10px;font-size:7.700px;color:#f2f2f2;letter-spacing:-.1px">17 May 15:35</div>
<div class="a" style="left:465.2px;top:534.300px;height:10px;line-height:10px;font-size:7.700px;color:#f2f2f2;letter-spacing:-.1px">17 May 18:15</div>
<div class="a" style="left:516.8px;top:534.300px;height:10px;line-height:10px;font-size:7.700px;color:#f2f2f2;letter-spacing:-.1px">17 May 20:55</div>
<div class="a" style="left:568.4px;top:534.300px;height:10px;line-height:10px;font-size:7.700px;color:#f2f2f2;letter-spacing:-.1px">17 May 23:35</div>
<div class="a" style="left:620.0px;top:534.300px;height:10px;line-height:10px;font-size:7.700px;color:#f2f2f2;letter-spacing:-.1px">18 May 02:15</div>
<div class="a" style="left:671.6px;top:534.300px;height:10px;line-height:10px;font-size:7.700px;color:#f2f2f2;letter-spacing:-.1px">18 May 04:55</div>
<div class="a" style="left:723.2px;top:534.300px;height:10px;line-height:10px;font-size:7.700px;color:#f2f2f2;letter-spacing:-.1px">18 May 07:35</div>
<div class="a" style="left:774.8px;top:534.300px;height:10px;line-height:10px;font-size:7.700px;color:#f2f2f2;letter-spacing:-.1px">18 May 10:15</div>
<div class="a" style="left:17px;top:102px;width:242.500px;height:274px;background:#282c34"></div>
<div class="a" style="left:17px;top:102px;width:242.500px;height:22px;background:#1f1f1f"></div>
<div class="a" style="left:26.500px;top:113px;width:3.500px;height:1.600px;background:#e8e8e8"></div>
<div class="a" style="left:41.0px;top:107.1px;height:15.6px;line-height:15.6px;font-size:10.40px;color:#fff;font-weight:bold;">移</div>
<div class="a" style="left:113.5px;top:107.6px;height:15.6px;line-height:15.6px;font-size:10.40px;color:#fff;font-weight:bold;">交易宝<span style="position:relative;top:-.1em">-</span>精英版</div>
<div class="a" style="left:17.2px;top:126.2px;width:64.1px;height:23.8px;background:#f0f0f0;border-radius:1.5px;color:#0c0c0c;font-size:9.4px;font-weight:bold;text-align:center;line-height:24.4px"></div>
<div class="a" style="left:27.2px;top:131.9px;height:15.7px;line-height:15.7px;font-size:10.45px;color:#1a1a1a;font-weight:bold;">订单下单</div>
<div class="a" style="left:27.2px;top:156.7px;height:15.7px;line-height:15.7px;font-size:10.45px;color:#f4f4f4;font-weight:bold;">订单平仓</div>
<div class="a" style="left:27.2px;top:180.6px;height:15.7px;line-height:15.7px;font-size:10.45px;color:#f4f4f4;font-weight:bold;">订单修改</div>
<div class="a" style="left:27.2px;top:204.7px;height:15.7px;line-height:15.7px;font-size:10.45px;color:#f4f4f4;font-weight:bold;">挂单功能</div>
<div class="a" style="left:27.2px;top:229.1px;height:15.7px;line-height:15.7px;font-size:10.45px;color:#f4f4f4;font-weight:bold;">网址导航</div>
<div class="a" style="left:27.2px;top:253.6px;height:15.7px;line-height:15.7px;font-size:10.45px;color:#f4f4f4;font-weight:bold;">联系我们</div>
<div class="a" style="left:97.6px;top:126.2px;width:64.4px;height:23.8px;background:#6fd09b;border-radius:2.0px;color:#0c0c0c;font-size:9.4px;font-weight:bold;text-align:center;line-height:24.4px"></div>
<div class="a" style="left:97.6px;top:128.5px;height:21.8px;line-height:21.8px;font-size:14.50px;color:#fff;font-weight:bold;width:64.4px;text-align:center;">多</div>
<div class="a" style="left:178.4px;top:126.2px;width:64.6px;height:23.8px;background:#ee5c5c;border-radius:2.0px;color:#0c0c0c;font-size:9.4px;font-weight:bold;text-align:center;line-height:24.4px"></div>
<div class="a" style="left:178.4px;top:128.5px;height:21.8px;line-height:21.8px;font-size:14.50px;color:#fff;font-weight:bold;width:64.6px;text-align:center;">空</div>
<div class="a" style="left:97.6px;top:158.4px;width:145.4px;height:23.8px;background:#2d8cf0;border-radius:2.0px;color:#0c0c0c;font-size:9.4px;font-weight:bold;text-align:center;line-height:24.4px"></div>
<div class="a" style="left:97.6px;top:160.2px;height:22.5px;line-height:22.5px;font-size:15.00px;color:#fff;font-weight:bold;width:145.4px;text-align:center;">锁仓</div>
<div class="a" style="letter-spacing:0.252px;left:97.8px;top:190.5px;height:13.0px;line-height:13.0px;font-size:8.70px;color:#fff;font-weight:bold;">EURUSD</div>
<div class="a" style="left:162.0px;top:191.9px;height:13.2px;line-height:13.2px;font-size:8.80px;color:#fff;font-weight:bold;">手数</div>
<div class="a" style="left:185.0px;top:191.6px;height:11.2px;line-height:11.2px;font-size:7.50px;color:#d8dde4;font-weight:bold;">+</div>
<div class="a" style="left:194.5px;top:190.8px;width:40.3px;height:15.2px;background:#efefef;border-radius:2.0px;color:#0c0c0c;font-size:9.4px;font-weight:bold;text-align:center;line-height:15.8px">0.01</div>
<div class="a" style="left:238.5px;top:191.4px;height:11.2px;line-height:11.2px;font-size:7.50px;color:#d8dde4;font-weight:bold;">-</div>
<div class="a" style="left:98.0px;top:212.2px;height:13.2px;line-height:13.2px;font-size:8.80px;color:#fff;font-weight:bold;">止损</div>
<div class="a" style="left:120.7px;top:211.9px;height:11.2px;line-height:11.2px;font-size:7.50px;color:#d8dde4;font-weight:bold;">+</div>
<div class="a" style="left:130.0px;top:211.0px;width:28.3px;height:14.0px;background:#efefef;border-radius:2.0px;color:#0c0c0c;font-size:9.4px;font-weight:bold;text-align:center;line-height:14.6px">10</div>
<div class="a" style="left:162.5px;top:211.7px;height:11.2px;line-height:11.2px;font-size:7.50px;color:#d8dde4;font-weight:bold;">-</div>
<div class="a" style="left:175.0px;top:212.2px;height:13.2px;line-height:13.2px;font-size:8.80px;color:#fff;font-weight:bold;">止盈</div>
<div class="a" style="left:197.0px;top:211.9px;height:11.2px;line-height:11.2px;font-size:7.50px;color:#d8dde4;font-weight:bold;">+</div>
<div class="a" style="left:206.6px;top:211.0px;width:28.2px;height:14.0px;background:#efefef;border-radius:2.0px;color:#0c0c0c;font-size:9.4px;font-weight:bold;text-align:center;line-height:14.6px">0</div>
<div class="a" style="left:238.5px;top:211.7px;height:11.2px;line-height:11.2px;font-size:7.50px;color:#d8dde4;font-weight:bold;">-</div>
<div class="a" style="letter-spacing:0.306px;left:97.8px;top:231.0px;height:13.0px;line-height:13.0px;font-size:8.70px;color:#fff;font-weight:bold;">MAGIC</div>
<div class="a" style="left:138.3px;top:230.8px;width:104.7px;height:14.2px;background:#efefef;border-radius:2.0px;color:#0c0c0c;font-size:9.4px;font-weight:bold;text-align:center;line-height:14.8px">0</div>
<div class="a" style="left:98.0px;top:252.2px;height:13.2px;line-height:13.2px;font-size:8.80px;color:#fff;font-weight:bold;">注释</div>
<div class="a" style="left:138.3px;top:251.0px;width:104.7px;height:16.0px;background:#efefef;border-radius:2.0px;color:#0c0c0c;font-size:9.4px;font-weight:bold;text-align:center;line-height:16.6px"></div>
<div class="a" style="left:97.6px;top:274.9px;width:145.4px;height:16.3px;background:#ee5c5c;border-radius:1.5px;color:#0c0c0c;font-size:9.4px;font-weight:bold;text-align:center;line-height:16.9px"></div>
<div class="a" style="left:97.6px;top:277.3px;height:14.4px;line-height:14.4px;font-size:9.60px;color:#fff;font-weight:bold;width:145.4px;text-align:center;">逆势加仓<span style="display:inline-block;width:6.600px"></span>停用</div>
<div class="a" style="left:97.6px;top:299.4px;width:28.4px;height:15.8px;background:#efefef;border-radius:2.0px;color:#0c0c0c;font-size:9.4px;font-weight:bold;text-align:center;line-height:16.4px">100</div>
<div class="a" style="left:130.0px;top:300.9px;height:15.0px;line-height:15.0px;font-size:10.00px;color:#e6edf6;font-weight:bold;">点</div>
<div class="a" style="left:146.0px;top:299.4px;width:28.0px;height:15.8px;background:#efefef;border-radius:2.0px;color:#0c0c0c;font-size:9.4px;font-weight:bold;text-align:center;line-height:16.4px">1.1</div>
<div class="a" style="left:178.4px;top:300.9px;height:15.0px;line-height:15.0px;font-size:10.00px;color:#e6edf6;font-weight:bold;">倍</div>
<div class="a" style="left:194.5px;top:299.4px;width:28.5px;height:15.8px;background:#efefef;border-radius:2.0px;color:#0c0c0c;font-size:9.4px;font-weight:bold;text-align:center;line-height:16.4px">10</div>
<div class="a" style="left:227.0px;top:300.9px;height:15.0px;line-height:15.0px;font-size:10.00px;color:#e6edf6;font-weight:bold;">次</div>
<div class="a" style="left:97.6px;top:323.2px;width:145.4px;height:16.3px;background:#ee5c5c;border-radius:1.5px;color:#0c0c0c;font-size:9.4px;font-weight:bold;text-align:center;line-height:16.9px"></div>
<div class="a" style="left:97.6px;top:325.7px;height:14.4px;line-height:14.4px;font-size:9.60px;color:#fff;font-weight:bold;width:145.4px;text-align:center;">顺势加仓<span style="display:inline-block;width:6.600px"></span>停用</div>
<div class="a" style="left:97.6px;top:347.7px;width:28.4px;height:16.3px;background:#efefef;border-radius:2.0px;color:#0c0c0c;font-size:9.4px;font-weight:bold;text-align:center;line-height:16.9px">100</div>
<div class="a" style="left:130.0px;top:349.5px;height:15.0px;line-height:15.0px;font-size:10.00px;color:#e6edf6;font-weight:bold;">点</div>
<div class="a" style="left:146.0px;top:347.7px;width:28.0px;height:16.3px;background:#efefef;border-radius:2.0px;color:#0c0c0c;font-size:9.4px;font-weight:bold;text-align:center;line-height:16.9px">0.9</div>
<div class="a" style="left:178.4px;top:349.5px;height:15.0px;line-height:15.0px;font-size:10.00px;color:#e6edf6;font-weight:bold;">倍</div>
<div class="a" style="left:194.5px;top:347.7px;width:28.5px;height:16.3px;background:#efefef;border-radius:2.0px;color:#0c0c0c;font-size:9.4px;font-weight:bold;text-align:center;line-height:16.9px">10</div>
<div class="a" style="left:227.0px;top:349.5px;height:15.0px;line-height:15.0px;font-size:10.00px;color:#e6edf6;font-weight:bold;">次</div>
<div class="a" style="left:0;top:550px;width:1024px;height:176px;background:#f0f0f0"></div>
<div class="a" style="left:0;top:550px;width:1024px;height:1px;background:#6e6e6e"></div>
<div class="a" style="left:373px;top:550px;width:73.500px;height:14.600px;background:#fff;border:1px solid #222;border-top:none"></div>
<div class="a" style="letter-spacing:0.267px;left:11.0px;top:552px;height:13px;line-height:13px;font-size:9.200px;color:#7e7e7e">USDCAD,H1</div>
<div class="a" style="letter-spacing:0.382px;left:83.5px;top:552px;height:13px;line-height:13px;font-size:9.200px;color:#7e7e7e">USDCHF,H1</div>
<div class="a" style="letter-spacing:0.547px;left:155.0px;top:552px;height:13px;line-height:13px;font-size:9.200px;color:#7e7e7e">AUDCHF,M5</div>
<div class="a" style="letter-spacing:0.375px;left:231.0px;top:552px;height:13px;line-height:13px;font-size:9.200px;color:#7e7e7e">USDCAD,M5</div>
<div class="a" style="letter-spacing:0.264px;left:307.0px;top:552px;height:13px;line-height:13px;font-size:9.200px;color:#7e7e7e">GBPUSD,M5</div>
<div class="a" style="letter-spacing:0.375px;left:381.0px;top:552px;height:13px;line-height:13px;font-size:9.200px;color:#000">EURUSD,M5</div>
<div class="a" style="letter-spacing:0.734px;left:456.0px;top:552px;height:13px;line-height:13px;font-size:9.200px;color:#7e7e7e">USDJPY,M5</div>
<div class="a" style="letter-spacing:0.486px;left:527.0px;top:552px;height:13px;line-height:13px;font-size:9.200px;color:#7e7e7e">AUDUSD,M5</div>
<div class="a" style="left:75.0px;top:553px;width:1px;height:11px;background:#9c9c9c"></div>
<div class="a" style="left:147.5px;top:553px;width:1px;height:11px;background:#9c9c9c"></div>
<div class="a" style="left:221.5px;top:553px;width:1px;height:11px;background:#9c9c9c"></div>
<div class="a" style="left:298.0px;top:553px;width:1px;height:11px;background:#9c9c9c"></div>
<div class="a" style="left:518.0px;top:553px;width:1px;height:11px;background:#9c9c9c"></div>
<div class="a" style="left:594.5px;top:553px;width:1px;height:11px;background:#9c9c9c"></div>
<svg class="a" style="left:996px;top:553.700px" width="24" height="8" viewBox="0 0 24 8"><path d="M6.200 1.200v5.600l-2.800-2.800zM17.600 1.200v5.600l2.800-2.800z" fill="#a2a2a2"/></svg>
<div class="a" style="left:0;top:568px;width:10px;height:136px;background:linear-gradient(#f0f0f0 0,#eef0f2 12px,#dfe7f0 26px,#dde6f0 100px,#d8d8d8 116px,#cfcfcf 136px)"></div>
<svg class="a" style="left:-0.800px;top:570.300px" width="7" height="7" viewBox="0 0 7 7"><path d="M1.200 1.200l4 4M5.200 1.200l-4 4" stroke="#3a3a3a" stroke-width="1.050"/></svg>
<div class="a" style="left:-6.500px;top:687px;width:22px;height:10px;line-height:10px;font-size:8.500px;color:#222;transform:rotate(-90deg);text-align:center">终端</div>
<div class="a" style="left:9.2px;top:569.500px;width:1012.3px;height:114.500px;background:#f9f9f9;border-top:1px solid #dadada;border-left:1px solid #d0d0d0"></div>
<div class="a" style="left:9.8px;top:590.0px;width:998.7px;height:16.9px;background:#0875d4"></div>
<div class="a" style="left:9.8px;top:606.9px;width:998.7px;height:16.9px;background:#eaeaea"></div>
<div class="a" style="left:9.2px;top:623.3px;width:999.3px;height:1px;background:#dedede"></div>
<div class="a" style="left:9.8px;top:623.8px;width:998.7px;height:16.9px;background:#f8f8f8"></div>
<div class="a" style="left:9.2px;top:640.2px;width:999.3px;height:1px;background:#dedede"></div>
<div class="a" style="left:9.8px;top:640.7px;width:998.7px;height:16.9px;background:#eaeaea"></div>
<div class="a" style="left:9.2px;top:657.1px;width:999.3px;height:1px;background:#dedede"></div>
<div class="a" style="left:9.8px;top:657.6px;width:998.7px;height:16.9px;background:#f8f8f8"></div>
<div class="a" style="left:9.2px;top:674.0px;width:999.3px;height:1px;background:#dedede"></div>
<div class="a" style="left:9.2px;top:589px;width:999.3px;height:1px;background:#e2e2e2"></div>
<div class="a" style="left:88.5px;top:571px;width:1px;height:18px;background:rgba(160,160,160,.2)"></div>
<div class="a" style="left:88.5px;top:590px;width:1px;height:85px;background:rgba(165,165,165,.42)"></div>
<div class="a" style="left:199.5px;top:571px;width:1px;height:18px;background:rgba(160,160,160,.2)"></div>
<div class="a" style="left:199.5px;top:590px;width:1px;height:85px;background:rgba(165,165,165,.42)"></div>
<div class="a" style="left:256.0px;top:571px;width:1px;height:18px;background:rgba(160,160,160,.2)"></div>
<div class="a" style="left:256.0px;top:590px;width:1px;height:85px;background:rgba(165,165,165,.42)"></div>
<div class="a" style="left:298.4px;top:571px;width:1px;height:18px;background:rgba(160,160,160,.2)"></div>
<div class="a" style="left:298.4px;top:590px;width:1px;height:85px;background:rgba(165,165,165,.42)"></div>
<div class="a" style="left:354.0px;top:571px;width:1px;height:18px;background:rgba(160,160,160,.2)"></div>
<div class="a" style="left:354.0px;top:590px;width:1px;height:85px;background:rgba(165,165,165,.42)"></div>
<div class="a" style="left:414.5px;top:571px;width:1px;height:18px;background:rgba(160,160,160,.2)"></div>
<div class="a" style="left:414.5px;top:590px;width:1px;height:85px;background:rgba(165,165,165,.42)"></div>
<div class="a" style="left:476.0px;top:571px;width:1px;height:18px;background:rgba(160,160,160,.2)"></div>
<div class="a" style="left:476.0px;top:590px;width:1px;height:85px;background:rgba(165,165,165,.42)"></div>
<div class="a" style="left:538.0px;top:571px;width:1px;height:18px;background:rgba(160,160,160,.2)"></div>
<div class="a" style="left:538.0px;top:590px;width:1px;height:85px;background:rgba(165,165,165,.42)"></div>
<div class="a" style="left:598.5px;top:571px;width:1px;height:18px;background:rgba(160,160,160,.2)"></div>
<div class="a" style="left:598.5px;top:590px;width:1px;height:85px;background:rgba(165,165,165,.42)"></div>
<div class="a" style="left:660.0px;top:571px;width:1px;height:18px;background:rgba(160,160,160,.2)"></div>
<div class="a" style="left:660.0px;top:590px;width:1px;height:85px;background:rgba(165,165,165,.42)"></div>
<div class="a" style="left:721.0px;top:571px;width:1px;height:18px;background:rgba(160,160,160,.2)"></div>
<div class="a" style="left:721.0px;top:590px;width:1px;height:85px;background:rgba(165,165,165,.42)"></div>
<div class="a" style="left:813.6px;top:571px;width:1px;height:18px;background:rgba(160,160,160,.2)"></div>
<div class="a" style="left:813.6px;top:590px;width:1px;height:85px;background:rgba(165,165,165,.42)"></div>
<div class="a" style="left:14.5px;top:574.0px;width:68.7px;height:14px;line-height:14px;font-size:9.80px;color:#1a1a1a;text-align:left;">订单</div>
<div class="a" style="left:91.9px;top:574.0px;width:104.2px;height:14px;line-height:14px;font-size:9.80px;color:#1a1a1a;text-align:right;">时间</div>
<div class="a" style="left:202.9px;top:574.0px;width:49.7px;height:14px;line-height:14px;font-size:9.80px;color:#1a1a1a;text-align:right;">类型</div>
<div class="a" style="left:259.4px;top:574.0px;width:35.6px;height:14px;line-height:14px;font-size:9.80px;color:#1a1a1a;text-align:right;">手数</div>
<div class="a" style="left:306.9px;top:574.0px;width:38.6px;height:14px;line-height:14px;font-size:9.80px;color:#1a1a1a;text-align:left;">交易...</div>
<div class="a" style="left:357.4px;top:574.0px;width:53.7px;height:14px;line-height:14px;font-size:9.80px;color:#1a1a1a;text-align:right;">价格</div>
<div class="a" style="left:417.9px;top:574.0px;width:54.7px;height:14px;line-height:14px;font-size:9.80px;color:#1a1a1a;text-align:right;">止损</div>
<div class="a" style="left:479.4px;top:574.0px;width:55.2px;height:14px;line-height:14px;font-size:9.80px;color:#1a1a1a;text-align:right;">止盈</div>
<div class="a" style="left:541.4px;top:574.0px;width:53.7px;height:14px;line-height:14px;font-size:9.80px;color:#1a1a1a;text-align:right;">价格</div>
<div class="a" style="left:601.9px;top:574.0px;width:54.7px;height:14px;line-height:14px;font-size:9.80px;color:#1a1a1a;text-align:right;">手续费</div>
<div class="a" style="left:663.4px;top:574.0px;width:54.2px;height:14px;line-height:14px;font-size:9.80px;color:#1a1a1a;text-align:right;">库存费</div>
<div class="a" style="left:724.4px;top:574.0px;width:85.4px;height:14px;line-height:14px;font-size:9.80px;color:#1a1a1a;text-align:right;">获利</div>
<div class="a" style="left:817.0px;top:574.0px;width:186.2px;height:14px;line-height:14px;font-size:9.80px;color:#1a1a1a;text-align:right;">注释</div>
<svg class="a" style="left:343px;top:577px" width="5" height="6" viewBox="0 0 5 6"><path d="M1 5L4 1" stroke="#8a8a8a" stroke-width=".8"/></svg>
<svg class="a" style="left:11px;top:591.2px" width="12" height="15" viewBox="0 0 12 15" fill="none"><path d="M1.700 3.200h5.400l2.700 2.700v6.500h-8.100z" fill="#fff" stroke="#858585" stroke-width=".85"/><path d="M7.100 3.200v2.700h2.700" stroke="#858585" stroke-width=".7"/><circle cx="10" cy="11.100" r="2.700" fill="#ef6a2e" stroke="#b8430f" stroke-width=".6"/></svg>
<div class="a" style="left:27.9px;top:592.1px;width:41.9px;height:14px;line-height:14px;font-size:10.05px;color:#fff;text-align:left;">123470429</div>
<div class="a" style="left:90.7px;top:592.1px;width:106.6px;height:14px;line-height:14px;font-size:10.05px;color:#fff;text-align:right;">2022.05.17 18:21:39</div>
<div class="a" style="left:201.7px;top:592.1px;width:52.1px;height:14px;line-height:14px;font-size:10.05px;color:#fff;text-align:right;">sell</div>
<div class="a" style="left:258.2px;top:592.1px;width:38.0px;height:14px;line-height:14px;font-size:10.05px;color:#fff;text-align:right;">1.00</div>
<div class="a" style="left:300.6px;top:592.1px;width:51.2px;height:14px;line-height:14px;font-size:10.05px;color:#fff;text-align:right;">gbpusd</div>
<div class="a" style="left:356.2px;top:592.1px;width:56.1px;height:14px;line-height:14px;font-size:10.05px;color:#fff;text-align:right;">1.24603</div>
<div class="a" style="left:416.7px;top:592.1px;width:57.1px;height:14px;line-height:14px;font-size:10.05px;color:#fff;text-align:right;">0.00000</div>
<div class="a" style="left:478.2px;top:592.1px;width:57.6px;height:14px;line-height:14px;font-size:10.05px;color:#fff;text-align:right;">0.00000</div>
<div class="a" style="left:540.2px;top:592.1px;width:56.1px;height:14px;line-height:14px;font-size:10.05px;color:#fff;text-align:right;">1.24086</div>
<div class="a" style="left:600.7px;top:592.1px;width:57.1px;height:14px;line-height:14px;font-size:10.05px;color:#fff;text-align:right;">0.00</div>
<div class="a" style="left:662.2px;top:592.1px;width:56.6px;height:14px;line-height:14px;font-size:10.05px;color:#fff;text-align:right;">-3.63</div>
<div class="a" style="left:723.2px;top:592.1px;width:72.1px;height:14px;line-height:14px;font-size:10.05px;color:#fff;text-align:right;">517.00</div>
<svg class="a" style="left:803px;top:595.8px" width="7" height="7" viewBox="0 0 7 7"><path d="M.8 .8l5.400 5.400M6.200 .8l-5.400 5.400" stroke="#e8f1fb" stroke-width="1.100"/></svg>
<svg class="a" style="left:11px;top:608.1px" width="12" height="15" viewBox="0 0 12 15" fill="none"><path d="M1.700 3.200h5.400l2.700 2.700v6.500h-8.100z" fill="#fff" stroke="#858585" stroke-width=".85"/><path d="M7.100 3.200v2.700h2.700" stroke="#858585" stroke-width=".7"/><circle cx="10" cy="11.100" r="2.700" fill="#ef6a2e" stroke="#b8430f" stroke-width=".6"/></svg>
<div class="a" style="left:27.9px;top:608.9px;width:41.9px;height:14px;line-height:14px;font-size:10.05px;color:#1a1a1a;text-align:left;">123476614</div>
<div class="a" style="left:90.7px;top:608.9px;width:106.6px;height:14px;line-height:14px;font-size:10.05px;color:#1a1a1a;text-align:right;">2022.05.17 19:09:58</div>
<div class="a" style="left:201.7px;top:608.9px;width:52.1px;height:14px;line-height:14px;font-size:10.05px;color:#1a1a1a;text-align:right;">sell</div>
<div class="a" style="left:258.2px;top:608.9px;width:38.0px;height:14px;line-height:14px;font-size:10.05px;color:#1a1a1a;text-align:right;">2.00</div>
<div class="a" style="left:300.6px;top:608.9px;width:51.2px;height:14px;line-height:14px;font-size:10.05px;color:#1a1a1a;text-align:right;">gbpusd</div>
<div class="a" style="left:356.2px;top:608.9px;width:56.1px;height:14px;line-height:14px;font-size:10.05px;color:#1a1a1a;text-align:right;">1.24737</div>
<div class="a" style="left:416.7px;top:608.9px;width:57.1px;height:14px;line-height:14px;font-size:10.05px;color:#1a1a1a;text-align:right;">0.00000</div>
<div class="a" style="left:478.2px;top:608.9px;width:57.6px;height:14px;line-height:14px;font-size:10.05px;color:#1a1a1a;text-align:right;">0.00000</div>
<div class="a" style="left:540.2px;top:608.9px;width:56.1px;height:14px;line-height:14px;font-size:10.05px;color:#1a1a1a;text-align:right;">1.24086</div>
<div class="a" style="left:600.7px;top:608.9px;width:57.1px;height:14px;line-height:14px;font-size:10.05px;color:#1a1a1a;text-align:right;">0.00</div>
<div class="a" style="left:662.2px;top:608.9px;width:56.6px;height:14px;line-height:14px;font-size:10.05px;color:#1a1a1a;text-align:right;">-7.26</div>
<div class="a" style="left:723.2px;top:608.9px;width:72.1px;height:14px;line-height:14px;font-size:10.05px;color:#1a1a1a;text-align:right;">1 302.00</div>
<svg class="a" style="left:803px;top:612.6px" width="7" height="7" viewBox="0 0 7 7"><path d="M.8 .8l5.400 5.400M6.200 .8l-5.400 5.400" stroke="#8a8a8a" stroke-width="1.100"/></svg>
<svg class="a" style="left:11px;top:625.0px" width="12" height="15" viewBox="0 0 12 15" fill="none"><path d="M1.700 3.200h5.400l2.700 2.700v6.500h-8.100z" fill="#fff" stroke="#858585" stroke-width=".85"/><path d="M7.100 3.200v2.700h2.700" stroke="#858585" stroke-width=".7"/><circle cx="10" cy="11.100" r="2.700" fill="#ef6a2e" stroke="#b8430f" stroke-width=".6"/></svg>
<div class="a" style="left:27.9px;top:625.9px;width:41.9px;height:14px;line-height:14px;font-size:10.05px;color:#1a1a1a;text-align:left;">123510305</div>
<div class="a" style="left:90.7px;top:625.9px;width:106.6px;height:14px;line-height:14px;font-size:10.05px;color:#1a1a1a;text-align:right;">2022.05.18 03:37:11</div>
<div class="a" style="left:201.7px;top:625.9px;width:52.1px;height:14px;line-height:14px;font-size:10.05px;color:#1a1a1a;text-align:right;">sell</div>
<div class="a" style="left:258.2px;top:625.9px;width:38.0px;height:14px;line-height:14px;font-size:10.05px;color:#1a1a1a;text-align:right;">3.00</div>
<div class="a" style="left:300.6px;top:625.9px;width:51.2px;height:14px;line-height:14px;font-size:10.05px;color:#1a1a1a;text-align:right;">gbpusd</div>
<div class="a" style="left:356.2px;top:625.9px;width:56.1px;height:14px;line-height:14px;font-size:10.05px;color:#1a1a1a;text-align:right;">1.24907</div>
<div class="a" style="left:416.7px;top:625.9px;width:57.1px;height:14px;line-height:14px;font-size:10.05px;color:#1a1a1a;text-align:right;">0.00000</div>
<div class="a" style="left:478.2px;top:625.9px;width:57.6px;height:14px;line-height:14px;font-size:10.05px;color:#1a1a1a;text-align:right;">0.00000</div>
<div class="a" style="left:540.2px;top:625.9px;width:56.1px;height:14px;line-height:14px;font-size:10.05px;color:#1a1a1a;text-align:right;">1.24086</div>
<div class="a" style="left:600.7px;top:625.9px;width:57.1px;height:14px;line-height:14px;font-size:10.05px;color:#1a1a1a;text-align:right;">0.00</div>
<div class="a" style="left:662.2px;top:625.9px;width:56.6px;height:14px;line-height:14px;font-size:10.05px;color:#1a1a1a;text-align:right;">0.00</div>
<div class="a" style="left:723.2px;top:625.9px;width:72.1px;height:14px;line-height:14px;font-size:10.05px;color:#1a1a1a;text-align:right;">2 463.00</div>
<svg class="a" style="left:803px;top:629.6px" width="7" height="7" viewBox="0 0 7 7"><path d="M.8 .8l5.400 5.400M6.200 .8l-5.400 5.400" stroke="#8a8a8a" stroke-width="1.100"/></svg>
<svg class="a" style="left:11px;top:641.9px" width="12" height="15" viewBox="0 0 12 15" fill="none"><path d="M1.700 3.200h5.400l2.700 2.700v6.500h-8.100z" fill="#fff" stroke="#858585" stroke-width=".85"/><path d="M7.100 3.200v2.700h2.700" stroke="#858585" stroke-width=".7"/><circle cx="10" cy="11.100" r="2.700" fill="#ef6a2e" stroke="#b8430f" stroke-width=".6"/></svg>
<div class="a" style="left:27.9px;top:642.8px;width:41.9px;height:14px;line-height:14px;font-size:10.05px;color:#1a1a1a;text-align:left;">123470183</div>
<div class="a" style="left:90.7px;top:642.8px;width:106.6px;height:14px;line-height:14px;font-size:10.05px;color:#1a1a1a;text-align:right;">2022.05.17 18:20:12</div>
<div class="a" style="left:201.7px;top:642.8px;width:52.1px;height:14px;line-height:14px;font-size:10.05px;color:#1a1a1a;text-align:right;">sell</div>
<div class="a" style="left:258.2px;top:642.8px;width:38.0px;height:14px;line-height:14px;font-size:10.05px;color:#1a1a1a;text-align:right;">1.00</div>
<div class="a" style="left:300.6px;top:642.8px;width:51.2px;height:14px;line-height:14px;font-size:10.05px;color:#1a1a1a;text-align:right;">usdcad</div>
<div class="a" style="left:356.2px;top:642.8px;width:56.1px;height:14px;line-height:14px;font-size:10.05px;color:#1a1a1a;text-align:right;">1.28428</div>
<div class="a" style="left:416.7px;top:642.8px;width:57.1px;height:14px;line-height:14px;font-size:10.05px;color:#1a1a1a;text-align:right;">0.00000</div>
<div class="a" style="left:478.2px;top:642.8px;width:57.6px;height:14px;line-height:14px;font-size:10.05px;color:#1a1a1a;text-align:right;">0.00000</div>
<div class="a" style="left:540.2px;top:642.8px;width:56.1px;height:14px;line-height:14px;font-size:10.05px;color:#1a1a1a;text-align:right;">1.28353</div>
<div class="a" style="left:600.7px;top:642.8px;width:57.1px;height:14px;line-height:14px;font-size:10.05px;color:#1a1a1a;text-align:right;">0.00</div>
<div class="a" style="left:662.2px;top:642.8px;width:56.6px;height:14px;line-height:14px;font-size:10.05px;color:#1a1a1a;text-align:right;">-2.58</div>
<div class="a" style="left:723.2px;top:642.8px;width:72.1px;height:14px;line-height:14px;font-size:10.05px;color:#1a1a1a;text-align:right;">58.43</div>
<svg class="a" style="left:803px;top:646.5px" width="7" height="7" viewBox="0 0 7 7"><path d="M.8 .8l5.400 5.400M6.200 .8l-5.400 5.400" stroke="#8a8a8a" stroke-width="1.100"/></svg>
<svg class="a" style="left:11px;top:658.8px" width="12" height="15" viewBox="0 0 12 15" fill="none"><path d="M1.700 3.200h5.400l2.700 2.700v6.500h-8.100z" fill="#fff" stroke="#858585" stroke-width=".85"/><path d="M7.100 3.200v2.700h2.700" stroke="#858585" stroke-width=".7"/><circle cx="10" cy="11.100" r="2.700" fill="#2f8fe8" stroke="#1b62b5" stroke-width=".6"/></svg>
<div class="a" style="left:27.9px;top:659.6px;width:41.9px;height:14px;line-height:14px;font-size:10.05px;color:#1a1a1a;text-align:left;">123470654</div>
<div class="a" style="left:90.7px;top:659.6px;width:106.6px;height:14px;line-height:14px;font-size:10.05px;color:#1a1a1a;text-align:right;">2022.05.17 18:24:00</div>
<div class="a" style="left:201.7px;top:659.6px;width:52.1px;height:14px;line-height:14px;font-size:10.05px;color:#1a1a1a;text-align:right;">buy</div>
<div class="a" style="left:258.2px;top:659.6px;width:38.0px;height:14px;line-height:14px;font-size:10.05px;color:#1a1a1a;text-align:right;">1.00</div>
<div class="a" style="left:300.6px;top:659.6px;width:51.2px;height:14px;line-height:14px;font-size:10.05px;color:#1a1a1a;text-align:right;">usdjpy</div>
<div class="a" style="left:356.2px;top:659.6px;width:56.1px;height:14px;line-height:14px;font-size:10.05px;color:#1a1a1a;text-align:right;">129.351</div>
<div class="a" style="left:416.7px;top:659.6px;width:57.1px;height:14px;line-height:14px;font-size:10.05px;color:#1a1a1a;text-align:right;">0.000</div>
<div class="a" style="left:478.2px;top:659.6px;width:57.6px;height:14px;line-height:14px;font-size:10.05px;color:#1a1a1a;text-align:right;">0.000</div>
<div class="a" style="left:540.2px;top:659.6px;width:56.1px;height:14px;line-height:14px;font-size:10.05px;color:#1a1a1a;text-align:right;">129.259</div>
<div class="a" style="left:600.7px;top:659.6px;width:57.1px;height:14px;line-height:14px;font-size:10.05px;color:#1a1a1a;text-align:right;">0.00</div>
<div class="a" style="left:662.2px;top:659.6px;width:56.6px;height:14px;line-height:14px;font-size:10.05px;color:#1a1a1a;text-align:right;">-0.07</div>
<div class="a" style="left:723.2px;top:659.6px;width:72.1px;height:14px;line-height:14px;font-size:10.05px;color:#1a1a1a;text-align:right;">-71.17</div>
<svg class="a" style="left:803px;top:663.4px" width="7" height="7" viewBox="0 0 7 7"><path d="M.8 .8l5.400 5.400M6.200 .8l-5.400 5.400" stroke="#8a8a8a" stroke-width="1.100"/></svg>
<div class="a" style="left:9.2px;top:674.500px;width:999.3px;height:9.500px;background:#c6c6c6;overflow:hidden"><svg class="a" style="left:2px;top:2.500px" width="11" height="11" viewBox="0 0 11 11"><rect x=".5" y=".5" width="10" height="10" rx="1.500" fill="#f4f4f4" stroke="#8a8a8a" stroke-width=".7"/><path d="M5.500 2.500l3 4h-6z" fill="#24a324"/></svg><div class="a" style="letter-spacing:0.077px;left:17.400px;top:2.300px;height:14px;line-height:14px;font-size:10.050px;font-weight:bold;color:#111">余额: 988 470.62 USD  净值: 992 726.34  已用预付款: 1 068.47  可用预付款: 991 657.87  预付款比例: 92911.35%</div><div class="a" style="left:690px;top:2.200px;width:97.500px;text-align:right;height:14px;line-height:14px;font-size:10.050px;font-weight:bold;color:#111">4 255.72</div></div>
<div class="a" style="left:1008.500px;top:570px;width:13px;height:114px;background:#f0f0f0"></div>
<div class="a" style="left:1009px;top:585px;width:12px;height:70.500px;background:#c1c1c1"></div>
<svg class="a" style="left:1011px;top:574px" width="8" height="6" viewBox="0 0 8 6" fill="none"><path d="M1 4.500l3-3 3 3" stroke="#333" stroke-width="1.100"/></svg>
<svg class="a" style="left:1011px;top:674px" width="8" height="6" viewBox="0 0 8 6" fill="none"><path d="M1 1.500l3 3 3-3" stroke="#333" stroke-width="1.100"/></svg>
<div class="a" style="left:9.2px;top:684px;width:1012.3px;height:1px;background:#3c3c3c"></div>
<div class="a" style="left:11.500px;top:684px;width:35px;height:17.500px;background:#fff;border:1px solid #2a2a2a;border-top:none;border-radius:0 0 1.500px 1.500px"></div>
<div class="a" style="left:19.3px;top:687px;height:14px;line-height:14px;font-size:9.900px;color:#000">交易</div>
<div class="a" style="left:54.6px;top:687px;height:14px;line-height:14px;font-size:9.900px;color:#8c8c8c">展示</div>
<div class="a" style="left:89.7px;top:687px;height:14px;line-height:14px;font-size:9.900px;color:#8c8c8c">账户历史</div>
<div class="a" style="left:145.0px;top:687px;height:14px;line-height:14px;font-size:9.900px;color:#8c8c8c">新闻</div>
<div class="a" style="left:180.3px;top:687px;height:14px;line-height:14px;font-size:9.900px;color:#8c8c8c">警报</div>
<div class="a" style="left:216.2px;top:687px;height:14px;line-height:14px;font-size:9.900px;color:#8c8c8c">邮箱</div>
<div class="a" style="left:250.5px;top:687px;height:14px;line-height:14px;font-size:9.900px;color:#8c8c8c">市场</div>
<div class="a" style="left:303.0px;top:687px;height:14px;line-height:14px;font-size:9.900px;color:#8c8c8c">信号</div>
<div class="a" style="left:338.6px;top:687px;height:14px;line-height:14px;font-size:9.900px;color:#8c8c8c">文章</div>
<div class="a" style="left:374.0px;top:687px;height:14px;line-height:14px;font-size:9.900px;color:#8c8c8c">代码库</div>
<div class="a" style="left:419.3px;top:687px;height:14px;line-height:14px;font-size:9.900px;color:#8c8c8c">EA</div>
<div class="a" style="left:447.5px;top:687px;height:14px;line-height:14px;font-size:9.900px;color:#8c8c8c">日志</div>
<div class="a" style="left:272.500px;top:691.500px;height:9px;line-height:9px;font-size:7.400px;font-weight:bold;color:#e8452c">120</div>
<div class="a" style="left:82.5px;top:687px;width:1px;height:12px;background:#8f8f8f"></div>
<div class="a" style="left:137.7px;top:687px;width:1px;height:12px;background:#8f8f8f"></div>
<div class="a" style="left:173.0px;top:687px;width:1px;height:12px;background:#8f8f8f"></div>
<div class="a" style="left:208.0px;top:687px;width:1px;height:12px;background:#8f8f8f"></div>
<div class="a" style="left:243.6px;top:687px;width:1px;height:12px;background:#8f8f8f"></div>
<div class="a" style="left:295.0px;top:687px;width:1px;height:12px;background:#8f8f8f"></div>
<div class="a" style="left:331.0px;top:687px;width:1px;height:12px;background:#8f8f8f"></div>
<div class="a" style="left:366.0px;top:687px;width:1px;height:12px;background:#8f8f8f"></div>
<div class="a" style="left:411.6px;top:687px;width:1px;height:12px;background:#8f8f8f"></div>
<div class="a" style="left:439.8px;top:687px;width:1px;height:12px;background:#8f8f8f"></div>
<div class="a" style="left:475.7px;top:687px;width:1px;height:12px;background:#8f8f8f"></div>
<div class="a" style="left:0;top:704.500px;width:1024px;height:1px;background:#d6d6d6"></div>
<div class="a" style="left:0;top:705.500px;width:1024px;height:1px;background:#fcfcfc"></div>
<div class="a" style="letter-spacing:-0.073px;left:-0.500px;top:710.800px;height:14px;line-height:14px;font-size:9.500px;color:#1a1a1a">寻求帮助,请按F1键</div>
<div class="a" style="letter-spacing:0.273px;left:372.700px;top:710.800px;height:14px;line-height:14px;font-size:10px;color:#111">Default</div>
<div class="a" style="left:367.5px;top:709px;width:1px;height:14px;background:#c2c2c2"></div>
<div class="a" style="left:476.5px;top:709px;width:1px;height:14px;background:#c2c2c2"></div>
<div class="a" style="left:570.8px;top:709px;width:1px;height:14px;background:#c2c2c2"></div>
<div class="a" style="left:637.0px;top:709px;width:1px;height:14px;background:#c2c2c2"></div>
<div class="a" style="left:702.5px;top:709px;width:1px;height:14px;background:#c2c2c2"></div>
<div class="a" style="left:829.5px;top:709px;width:1px;height:14px;background:#c2c2c2"></div>
<div class="a" style="left:892.5px;top:709px;width:1px;height:14px;background:#c2c2c2"></div>
<svg class="a" style="left:897.200px;top:711.400px" width="20" height="11" viewBox="0 0 20 11"><rect x="0.00" y="0" width="1.300" height="9.40" fill="#4d9b3c"/><rect x="0.00" y="9.40" width="1.300" height="0.80" fill="#24478f"/><rect x="1.87" y="0" width="1.300" height="8.68" fill="#4d9b3c"/><rect x="1.87" y="8.68" width="1.300" height="1.52" fill="#24478f"/><rect x="3.74" y="0" width="1.300" height="7.96" fill="#4d9b3c"/><rect x="3.74" y="7.96" width="1.300" height="2.24" fill="#24478f"/><rect x="5.61" y="0" width="1.300" height="7.24" fill="#4d9b3c"/><rect x="5.61" y="7.24" width="1.300" height="2.96" fill="#24478f"/><rect x="7.48" y="0" width="1.300" height="6.52" fill="#4d9b3c"/><rect x="7.48" y="6.52" width="1.300" height="3.68" fill="#24478f"/><rect x="9.35" y="0" width="1.300" height="5.80" fill="#4d9b3c"/><rect x="9.35" y="5.80" width="1.300" height="4.40" fill="#24478f"/><rect x="11.22" y="0" width="1.300" height="5.08" fill="#4d9b3c"/><rect x="11.22" y="5.08" width="1.300" height="5.12" fill="#24478f"/><rect x="13.09" y="0" width="1.300" height="4.36" fill="#4d9b3c"/><rect x="13.09" y="4.36" width="1.300" height="5.84" fill="#24478f"/><rect x="14.96" y="0" width="1.300" height="3.64" fill="#4d9b3c"/><rect x="14.96" y="3.64" width="1.300" height="6.56" fill="#24478f"/><rect x="16.83" y="0" width="1.300" height="2.92" fill="#4d9b3c"/><rect x="16.83" y="2.92" width="1.300" height="7.28" fill="#24478f"/></svg>
<div class="a" style="letter-spacing:0.147px;left:919.800px;top:710.800px;height:14px;line-height:14px;font-size:10.300px;color:#111">25571/25 kb</div>
<svg class="a" style="left:1012px;top:714px" width="11" height="11" viewBox="0 0 11 11"><path d="M10 2L2 10M10 5.500L5.500 10M10 8.500L8.500 10" stroke="#b0b0b0" stroke-width="1"/></svg>
<div class="a" style="left:0;top:724.300px;width:1024px;height:1.700px;background:linear-gradient(#8a8a8a,#333)"></div>
</div>
</body></html>
